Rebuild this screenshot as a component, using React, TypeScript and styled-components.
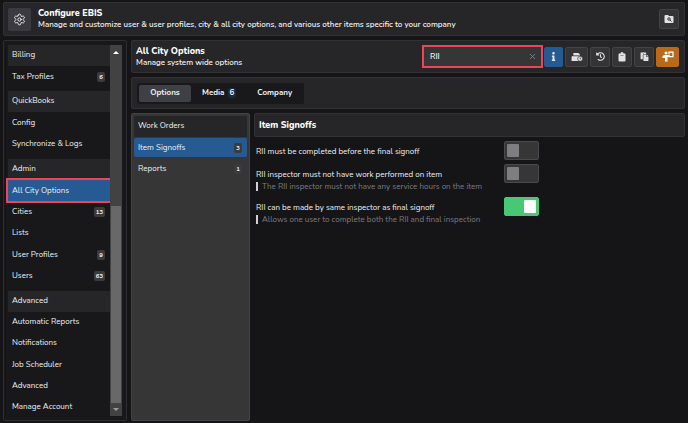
import React, { useState } from "react";
import styled, { createGlobalStyle, css } from "styled-components";
import { FaInfo, FaHistory, FaPaste } from "react-icons/fa";
import { Settings, X } from "lucide-react";

const Global = createGlobalStyle`
  *, *::before, *::after { box-sizing: border-box; }
  body {
    margin: 0;
    background: #151517;
    color: #f0f0f2;
    font-family: Nunito, Lato, sans-serif;
    font-size: 8px;
    line-height: 12px;
  }
  button, input { font: inherit; color: inherit; }
  h1, h2, h3, p, ul { margin: 0; padding: 0; }
  ul { list-style: none; }
`;

const Page = styled.div`
  display: flex;
  flex-direction: column;
  gap: 4px;
  min-height: 100vh;
  padding: 2px 3px;
`;

const Panel = styled.section`
  display: flex;
  align-items: center;
  background: #262628;
  border: 1px solid #323235;
  border-radius: 2px;
`;

const Header = styled(Panel).attrs({ as: "header" })`
  gap: 7px;
  min-height: 34px;
  padding: 0 5px 0 4px;
`;

const GearBox = styled.div`
  display: grid;
  place-items: center;
  width: 23px;
  height: 23px;
  border-radius: 2px;
  background: #3a3a40;
`;

const Titles = styled.div`
  flex: 1;
  min-width: 0;
  font-weight: 600;
`;

const Title = styled.h1`
  font-size: 9px;
  line-height: 12px;
  font-weight: 800;
  color: #fff;
`;

const Columns = styled.div`
  display: flex;
  flex: 1;
  gap: 4px;
`;

const Sidebar = styled.div`
  display: flex;
  flex: 0 0 124px;
  padding: 4px 4px 2px;
  background: #18181a;
  border: 1px solid #2e2e31;
  border-radius: 2px;
`;

const Nav = styled.nav`
  display: flex;
  flex: 1;
  flex-direction: column;
`;

const GroupTitle = styled.h2`
  flex: none;
  height: 21px;
  margin-top: 4px;
  padding-left: 4px;
  background: #262628;
  font-size: 8px;
  line-height: 20px;
  font-weight: 400;
  &:first-child { margin-top: 0; }
`;

const highlight = css`
  outline: 2px solid #ef4458;
`;

const NavLink = styled.a<{ $active?: boolean }>`
  display: flex;
  flex: 1 0 20px;
  align-items: center;
  justify-content: space-between;
  padding: 0 5px 0 4px;
  color: inherit;
  text-decoration: none;
  ${(p) => p.$active && css`background: #265a92; ${highlight}`}
`;

const Badge = styled.span`
  min-width: 8px;
  padding: 0 2px;
  border-radius: 2px;
  background: #3b3b3e;
  font-size: 6px;
  line-height: 10px;
  font-weight: 700;
  text-align: center;
`;

const ScrollBar = styled.div`
  display: flex;
  flex: 0 0 12px;
  flex-direction: column;
  margin-bottom: 2px;
  background: #424242;
`;

const ScrollArrow = styled.div`
  display: grid;
  flex: 0 0 13px;
  place-items: center;
`;

const ScrollTrack = styled.div`
  display: flex;
  flex: 1;
  flex-direction: column;
  justify-content: flex-end;
  padding: 0 1px;
`;

const ScrollThumb = styled.div`
  height: 57%;
  background: #686868;
`;

const Main = styled.main`
  display: flex;
  flex: 1;
  flex-direction: column;
  gap: 4px;
  min-width: 0;
`;

const Toolbar = styled(Panel)`
  gap: 2px;
  min-height: 33px;
  padding: 0 5px 0 4px;
`;

const SearchBox = styled.label`
  display: flex;
  flex: 0 0 117px;
  align-items: center;
  min-width: 0;
  height: 19px;
  margin-right: 1px;
  padding: 0 4px 0 6px;
  background: #363636;
  ${highlight}
`;

const SearchInput = styled.input`
  flex: 1;
  width: 100%;
  min-width: 0;
  padding: 0;
  border: 0;
  outline: 0;
  background: transparent;
  font-weight: 600;
`;

const ClearButton = styled.button`
  display: grid;
  padding: 0;
  border: 0;
  background: none;
  color: #8e8e90;
`;

const IconButton = styled.button<{ $tone?: "blue" | "orange"; $wide?: boolean }>`
  display: grid;
  flex: none;
  place-items: center;
  width: ${(p) => (p.$wide ? 23 : 20)}px;
  height: 20px;
  padding: 0;
  border: 1px solid #434345;
  border-radius: 2px;
  background: #343436;
  color: #e2e2e2;
  ${(p) => p.$tone === "blue" && css`width: 19px; background: #265a92; border-color: #265a92;`}
  ${(p) => p.$tone === "orange" && css`background: #b86a1a; border-color: #b86a1a;`}
`;

const TabPanel = styled(Panel)`
  min-height: 32px;
  padding: 0 5px;
`;

const Tabs = styled.div`
  display: flex;
  gap: 1px;
  padding: 2px;
  border-radius: 2px;
  background: #19191b;
`;

const Tab = styled.button<{ $active?: boolean }>`
  display: flex;
  align-items: center;
  justify-content: center;
  gap: 3px;
  min-width: 52px;
  height: 17px;
  padding: 0 10px;
  border: 0;
  border-radius: 2px;
  background: ${(p) => (p.$active ? "#3f3f46" : "transparent")};
  font-weight: 700;
`;

const TabCount = styled.span`
  padding: 0 2px;
  border-radius: 2px;
  background: #162a40;
  line-height: 10px;
`;

const Content = styled.div`
  display: flex;
  flex: 1;
  gap: 4px;
`;

const Categories = styled.nav`
  flex: 0 0 119px;
  padding: 2px;
  background: #363636;
  border: 1px solid #434345;
  border-radius: 2px;
`;

const CategoryTitle = styled.h2`
  height: 21px;
  margin-bottom: 1px;
  padding-left: 4px;
  background: #262628;
  font-size: 8px;
  line-height: 20px;
  font-weight: 400;
`;

const Category = styled.a<{ $active?: boolean }>`
  display: flex;
  align-items: center;
  justify-content: space-between;
  height: 19px;
  margin-bottom: 2px;
  padding: 0 5px 0 4px;
  border-radius: 2px;
  background: ${(p) => (p.$active ? "#265a92" : "transparent")};
  color: inherit;
  text-decoration: none;
`;

const OptionSection = styled.section`
  flex: 1;
  min-width: 0;
`;

const SectionTitle = styled(Panel).attrs({ as: "h2" })`
  height: 24px;
  padding-left: 4px;
  font-size: 9px;
  font-weight: 800;
  color: #fff;
`;

const OptionList = styled.ul`
  display: flex;
  flex-direction: column;
  padding: 4px 0 0 2px;
`;

const OptionRow = styled.li<{ $noted?: boolean }>`
  display: grid;
  grid-template-columns: 248px auto;
  justify-content: start;
  align-items: start;
  min-height: ${(p) => (p.$noted ? 33 : 23)}px;
`;

const OptionText = styled.div`
  padding-top: 5px;
`;

const Note = styled.p`
  margin-top: 1px;
  padding-left: 4px;
  border-left: 2px solid #d0d0d0;
  color: #7c7c80;
  line-height: 9px;
`;

const Toggle = styled.input.attrs({ type: "checkbox", role: "switch" })`
  appearance: none;
  display: flex;
  align-items: center;
  width: 35px;
  height: 19px;
  margin: 0;
  padding: 0 2px;
  border: 1px solid #4a4a4c;
  border-radius: 2px;
  background: #363636;
  &::before {
    content: "";
    width: 12px;
    height: 13px;
    border-radius: 1px;
    background: #7e7e80;
  }
  &:checked {
    justify-content: flex-end;
    border-color: #48c774;
    background: #48c774;
  }
  &:checked::before { background: #fff; }
`;

const FolderSearch = () => (
  <svg width="10" height="10" viewBox="0 0 20 20" aria-hidden="true">
    <path fill="currentColor" d="M1 4a2 2 0 0 1 2-2h5l2 2h7a2 2 0 0 1 2 2v10a2 2 0 0 1-2 2H3a2 2 0 0 1-2-2z" />
    <circle cx="10" cy="10" r="2.5" fill="none" stroke="#343436" strokeWidth="2" />
    <path stroke="#343436" strokeWidth="2" d="m12 12 3 3" />
  </svg>
);

const PrinterClock = () => (
  <svg width="12" height="10" viewBox="0 0 26 22" aria-hidden="true">
    <path fill="currentColor" d="M5 2h11l3 3v3H5zM4 9h14a3 3 0 0 1 3 3v8H2a1 1 0 0 1-1-1v-7a3 3 0 0 1 3-3z" />
    <path fill="none" stroke="#343436" strokeWidth="1.5" d="M4 8.500h14" />
    <circle cx="20" cy="15" r="5.5" fill="currentColor" stroke="#343436" strokeWidth="1.5" />
    <path fill="none" stroke="#343436" strokeWidth="1.5" d="M20 12v3.500h2" />
  </svg>
);

const Clipboard = () => (
  <svg width="8" height="10" viewBox="0 0 16 20" aria-hidden="true">
    <path fill="currentColor" d="M5 3a3 3 0 0 1 6 0h2a2 2 0 0 1 2 2v12a2 2 0 0 1-2 2H3a2 2 0 0 1-2-2V5a2 2 0 0 1 2-2z" />
    <path fill="#343436" d="M5 6h6v1H5z" />
  </svg>
);

const Presenter = () => (
  <svg width="12" height="11" viewBox="0 0 24 22" aria-hidden="true">
    <circle cx="8" cy="4" r="3" fill="#fff" />
    <path fill="#fff" d="M5 8h10v4h-4v9H6v-7H1v-4z" />
    <path fill="none" stroke="#fff" strokeWidth="2.500" d="M14 7V2h8v9h-8V9" />
  </svg>
);

const Arrow = ({ down }: { down?: boolean }) => (
  <svg width="6" height="4" viewBox="0 0 6 4" aria-hidden="true">
    <path fill={down ? "#9a9a9a" : "#fff"} d={down ? "M0 0h6L3 3z" : "M0 4h6L3 1z"} />
  </svg>
);

type Entry = { name: string; count?: number; active?: boolean };

const groups: { title: string; items: Entry[] }[] = [
  { title: "Billing", items: [{ name: "Tax Profiles", count: 6 }] },
  { title: "QuickBooks", items: [{ name: "Config" }, { name: "Synchronize & Logs" }] },
  {
    title: "Admin",
    items: [
      { name: "All City Options", active: true },
      { name: "Cities", count: 13 },
      { name: "Lists" },
      { name: "User Profiles", count: 9 },
      { name: "Users", count: 63 },
    ],
  },
  {
    title: "Advanced",
    items: [
      { name: "Automatic Reports" },
      { name: "Notifications" },
      { name: "Job Scheduler" },
      { name: "Advanced" },
      { name: "Manage Account" },
    ],
  },
];

const options = [
  { id: "before-final", label: "RII must be completed before the final signoff", on: false },
  {
    id: "no-work",
    label: "RII inspector must not have work performed on item",
    note: "The RII inspector must not have any service hours on the item",
    on: false,
  },
  {
    id: "same-inspector",
    label: "RII can be made by same inspector as final signoff",
    note: "Allows one user to complete both the RII and final inspection",
    on: true,
  },
];

export default function App() {
  const [query, setQuery] = useState("RII");

  return (
    <>
      <Global />
      <Page>
        <Header>
          <GearBox>
            <Settings size={13} strokeWidth={1.75} />
          </GearBox>
          <Titles>
            <Title>Configure EBIS</Title>
            <p>
              Manage and customize user &amp; user profiles, city &amp; all city options, and various
              other items specific to your company
            </p>
          </Titles>
          <IconButton aria-label="Search files"><FolderSearch /></IconButton>
        </Header>
        <Columns>
          <Sidebar>
            <Nav>
              {groups.map((g) => (
                <React.Fragment key={g.title}>
                  <GroupTitle>{g.title}</GroupTitle>
                  {g.items.map((i) => (
                    <NavLink key={i.name} href="#" $active={i.active}>
                      {i.name}
                      {i.count !== undefined && <Badge>{i.count}</Badge>}
                    </NavLink>
                  ))}
                </React.Fragment>
              ))}
            </Nav>
            <ScrollBar>
              <ScrollArrow><Arrow /></ScrollArrow>
              <ScrollTrack><ScrollThumb /></ScrollTrack>
              <ScrollArrow><Arrow down /></ScrollArrow>
            </ScrollBar>
          </Sidebar>
          <Main>
            <Toolbar>
              <Titles>
                <Title as="h2">All City Options</Title>
                <p>Manage system wide options</p>
              </Titles>
              <SearchBox>
                <SearchInput
                  aria-label="Search options"
                  value={query}
                  onChange={(e) => setQuery(e.target.value)}
                />
                <ClearButton aria-label="Clear" onClick={() => setQuery("")}>
                  <X size={9} />
                </ClearButton>
              </SearchBox>
              <IconButton $tone="blue" aria-label="Information"><FaInfo size={9} /></IconButton>
              <IconButton $wide aria-label="Print history"><PrinterClock /></IconButton>
              <IconButton aria-label="History"><FaHistory size={9} /></IconButton>
              <IconButton aria-label="Clipboard"><Clipboard /></IconButton>
              <IconButton aria-label="Paste"><FaPaste size={9} /></IconButton>
              <IconButton $wide $tone="orange" aria-label="Training"><Presenter /></IconButton>
            </Toolbar>
            <TabPanel>
              <Tabs>
                <Tab $active>Options</Tab>
                <Tab>Media <TabCount>6</TabCount></Tab>
                <Tab>Company</Tab>
              </Tabs>
            </TabPanel>
            <Content>
              <Categories>
                <CategoryTitle>Work Orders</CategoryTitle>
                <Category href="#" $active>Item Signoffs <Badge>3</Badge></Category>
                <Category href="#">Reports <Badge>1</Badge></Category>
              </Categories>
              <OptionSection>
                <SectionTitle>Item Signoffs</SectionTitle>
                <OptionList>
                  {options.map((o) => (
                    <OptionRow key={o.id} $noted={!!o.note}>
                      <OptionText>
                        <label htmlFor={o.id}>{o.label}</label>
                        {o.note && <Note>{o.note}</Note>}
                      </OptionText>
                      <Toggle id={o.id} defaultChecked={o.on} />
                    </OptionRow>
                  ))}
                </OptionList>
              </OptionSection>
            </Content>
          </Main>
        </Columns>
      </Page>
    </>
  );
}
